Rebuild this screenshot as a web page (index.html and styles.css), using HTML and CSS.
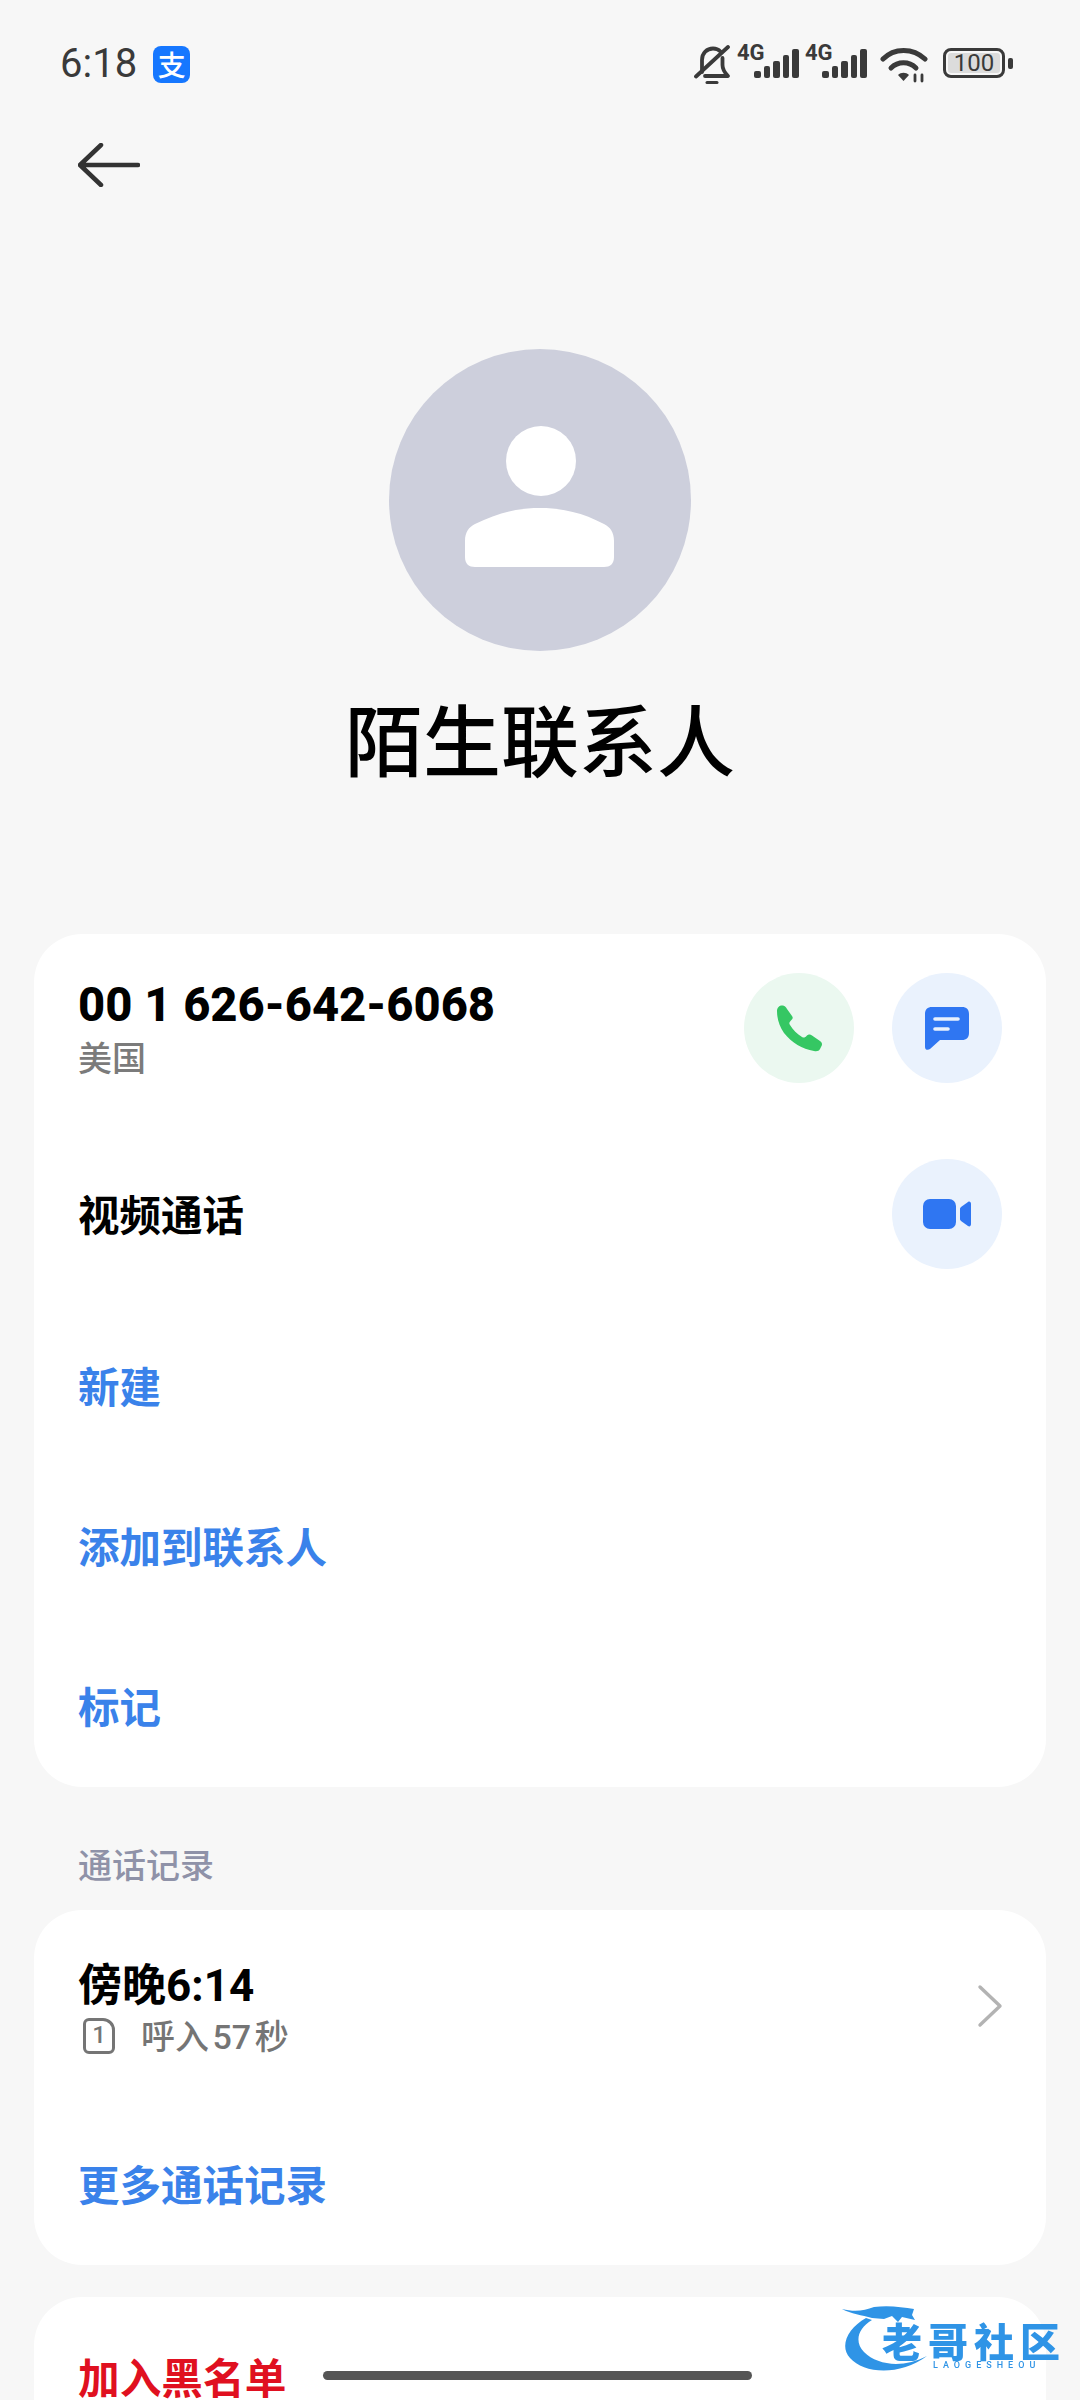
FILE: index.html
```html
<!DOCTYPE html>
<html>
<head>
  <title>陌生联系人</title>
  <link rel="stylesheet" href="styles.css">
</head>
<body>
  <div class="page">
    <div class="status-bar">
      <div class="status-left">
        <span class="clock">6:18</span>
        <span class="alipay">支</span>
      </div>
      <div class="status-right">
        <svg class="bell" width="38" height="40" viewBox="0 0 38 40" fill="none" stroke="#3a3a3a" stroke-width="3.800" stroke-linecap="round" stroke-linejoin="round">
          <path d="M9 27V15C9 8 14 3.500 20 3.500C23 3.500 25.500 4.500 27.500 6.500M29.500 13V20C29.500 24 31 27 35 31H12"/>
          <path d="M3 31.500L35 2"/>
          <path d="M14 37.500H24" stroke-width="3"/>
        </svg>
        <div class="sim">
          <span class="net">4G</span>
          <div class="bars"><i class="b1"></i><i class="b2"></i><i class="b3"></i><i class="b4"></i><i class="b5"></i></div>
        </div>
        <div class="sim">
          <span class="net">4G</span>
          <div class="bars"><i class="b1"></i><i class="b2"></i><i class="b3"></i><i class="b4"></i><i class="b5"></i></div>
        </div>
        <svg class="wifi" width="48" height="36" viewBox="0 0 48 36" fill="none" stroke="#3a3a3a" stroke-width="5" stroke-linecap="round">
          <path d="M3 12C14 0.500 33 0.500 45 12"/>
          <path d="M11 21C18 14 29 14 36 21"/>
          <path d="M18 28C21 25 26 25 29 28L23.500 34Z" fill="#3a3a3a" stroke="none"/>
          <path d="M35 28V34M42 28V34" stroke-width="2.800"/>
        </svg>
        <div class="battery">
          <div class="battery-body"><span class="battery-level">100</span></div>
          <div class="battery-tip"></div>
        </div>
      </div>
    </div>

    <div class="toolbar">
      <svg width="62" height="44" viewBox="0 0 62 44" fill="none" stroke="#333" stroke-width="4.500" stroke-linecap="round" stroke-linejoin="round">
        <path d="M2 22H60M23 2L2 22L23 42"/>
      </svg>
    </div>

    <div class="contact-head">
      <div class="avatar">
        <svg width="150" height="142" viewBox="0 0 150 142" fill="#fff">
          <circle cx="76" cy="35" r="35"/>
          <path d="M0 115C0 106 4 101 10 98C32 87 52 82 75 82C98 82 118 87 139 98C145 101 149 106 149 115V131C149 138 145 141 139 141H10C4 141 0 138 0 131Z"/>
        </svg>
      </div>
      <h1 class="contact-name">陌生联系人</h1>
    </div>

    <div class="card card-main">
      <div class="action-row">
        <div class="number-info">
          <div class="number">00 1 626-642-6068</div>
          <div class="region">美国</div>
        </div>
        <div class="round-btn green">
          <svg width="47" height="47" viewBox="0 0 47 47" fill="#35c763">
            <path d="M1 6C1 2 4 0 7 0.500C9 1 10 2 11 4L16 11C17.500 13 16.500 14 14.500 16C13 17.500 13 18.500 14 20C17 25 21 29 26 32C28 33 29 32.500 30.500 31C32 29.500 34 29 36 30.500L44 36C46 37.500 46.500 39 45.500 41L44 44C43 46 41 46.500 38 46C26 44 16 38 8 28C3 21 1 13 1 6Z"/>
          </svg>
        </div>
        <div class="round-btn blue">
          <svg width="44" height="43" viewBox="0 0 44 43" fill="#2f76f2">
            <path d="M7 0H37C41.500 0 44 2.500 44 7V26C44 30.500 41.500 33 37 33H15L5 42C3 43.500 0 43 0 40V7C0 2.500 2.500 0 7 0Z"/>
            <path d="M10 12H33M10 22H23" stroke="#e9f1fd" stroke-width="3.600" stroke-linecap="round"/>
          </svg>
        </div>
      </div>
      <div class="action-row video-row">
        <div class="row-title">视频通话</div>
        <div class="round-btn blue">
          <svg width="48" height="32" viewBox="0 0 48 32" fill="#2f76f2">
            <rect x="0" y="1" width="33" height="30" rx="7"/>
            <path d="M38 9L45 4C46.500 3 48 4 48 6V26C48 28 46.500 29 45 28L38 23C37 22 37 21.500 37 20.500V11.500C37 10.500 37 10 38 9Z"/>
          </svg>
        </div>
      </div>
      <div class="link-row">新建</div>
      <div class="link-row">添加到联系人</div>
      <div class="link-row">标记</div>
    </div>

    <div class="section-label">通话记录</div>

    <div class="card card-log">
      <div class="log-row">
        <div class="log-info">
          <div class="log-time">傍晚<span class="tight">6:14</span></div>
          <div class="log-detail">
            <span class="sim-badge">1</span>
            <span>呼入<span class="tight">57</span>秒</span>
          </div>
        </div>
        <svg class="chevron" width="26" height="44" viewBox="0 0 26 44" fill="none" stroke="#b3b3b3" stroke-width="3.400" stroke-linecap="round" stroke-linejoin="round">
          <path d="M3 3L23 22L3 41"/>
        </svg>
      </div>
      <div class="link-row more-row">更多通话记录</div>
    </div>

    <div class="card card-block">
      <div class="block-row">加入黑名单</div>
    </div>
  </div>

  <div class="home-bar"></div>

  <div class="watermark">
    <svg width="96" height="70" viewBox="0 0 96 70" fill="none">
      <path d="M24 14C6 24 -3 42 8 54C22 70 58 72 85 52C62 64 36 62 22 48C12 38 16 24 30 16Z" fill="#2f94e6"/>
      <path d="M0 5C12 8 22 7 32 3C46 1 60 3 72 5L70 11L73 16L60 13L56 18L50 12L42 15L30 14C20 11 9 10 0 5Z" fill="#2f94e6"/>
    </svg>
    <div class="wm-text">
      <div class="wm-title">老哥社区</div>
      <div class="wm-sub">LAOGESHEOU</div>
    </div>
  </div>
</body>
</html>
```

FILE: styles.css
```css
* {
  box-sizing: border-box;
}

html, body {
  margin: 0;
  height: 2400px;
  overflow: hidden;
}

body {
  position: relative;
  background-color: #f7f7f7;
  font-family: Roboto, "Noto Sans CJK SC", sans-serif;
  color: #000;
}

/* status bar */
.status-bar {
  height: 124px;
  padding: 44px 67px 0 60px;
  display: flex;
  justify-content: space-between;
  align-items: flex-start;
}

.status-left {
  display: flex;
  align-items: center;
  gap: 16px;
}

.clock {
  font-size: 40px;
  line-height: 40px;
  color: #3a3a3a;
}

.alipay {
  width: 37px;
  height: 37px;
  border-radius: 8px;
  background-color: #1677ff;
  color: #fff;
  font-size: 28px;
  line-height: 36px;
  text-align: center;
  font-family: "Noto Sans CJK SC", sans-serif;
  font-weight: 500;
}

.status-right {
  display: flex;
  align-items: flex-start;
}

.bell {
  margin-top: 1px;
  margin-right: 6px;
}

.sim {
  position: relative;
  width: 68px;
  height: 40px;
}

.net {
  position: absolute;
  left: 0;
  top: -3px;
  font-size: 22px;
  line-height: 24px;
  font-weight: 700;
  color: #3a3a3a;
}

.bars {
  position: absolute;
  left: 17px;
  bottom: 6px;
  display: flex;
  align-items: flex-end;
  gap: 3px;
}

.bars i {
  display: block;
  width: 6.500px;
  background-color: #3a3a3a;
  border-radius: 2px;
}

.bars .b1 { height: 7px; }
.bars .b2 { height: 12px; }
.bars .b3 { height: 17px; }
.bars .b4 { height: 23px; }
.bars .b5 { height: 29px; }

.wifi {
  margin: 3px 15px 0 7px;
}

.battery {
  display: flex;
  align-items: center;
  margin-top: 4px;
}

.battery-body {
  width: 62px;
  height: 30px;
  border: 3px solid #3a3a3a;
  border-radius: 8px;
  padding: 2px;
}

.battery-level {
  display: block;
  height: 20px;
  border-radius: 3px;
  background-color: #dcdcdc;
  color: #3a3a3a;
  font-size: 24px;
  line-height: 20px;
  text-align: center;
}

.battery-tip {
  width: 5px;
  height: 11px;
  margin-left: 3px;
  background-color: #3a3a3a;
  border-radius: 2px;
}

/* back arrow */
.toolbar {
  height: 225px;
  padding: 19px 0 0 78px;
}

/* avatar and name */
.contact-head {
  height: 585px;
  display: flex;
  flex-direction: column;
  align-items: center;
}

.avatar {
  width: 302px;
  height: 302px;
  border-radius: 50%;
  background-color: #cdcfdc;
  display: flex;
  align-items: center;
  justify-content: center;
  padding-bottom: 7px;
}

.contact-name {
  margin: 36px 0 0;
  font-family: "Noto Sans CJK SC", sans-serif;
  font-size: 78px;
  line-height: 100px;
  font-weight: 500;
}

/* cards */
.card {
  margin: 0 34px;
  background-color: #fff;
  border-radius: 48px;
}

.card-main {
  height: 853px;
  padding: 39px 44px 0;
}

.action-row {
  display: flex;
  align-items: center;
  gap: 38px;
  height: 110px;
}

.video-row {
  margin-top: 76px;
  margin-bottom: 36px;
}

.number-info {
  flex: 1;
  padding-bottom: 3px;
}

.number {
  font-size: 47.200px;
  line-height: 60px;
  font-weight: 800;
}

.region {
  font-family: "Noto Sans CJK SC", sans-serif;
  font-size: 34px;
  line-height: 44px;
  font-weight: 500;
  color: #7b7b7b;
}

.row-title {
  flex: 1;
  padding-bottom: 2px;
  font-family: "Noto Sans CJK SC", sans-serif;
  font-size: 41.500px;
  font-weight: 700;
}

.round-btn {
  width: 110px;
  height: 110px;
  border-radius: 50%;
  display: flex;
  align-items: center;
  justify-content: center;
}

.green {
  background-color: #ebf8f0;
}

.blue {
  background-color: #eaf2fd;
}

.link-row {
  height: 160px;
  display: flex;
  align-items: center;
  font-family: "Noto Sans CJK SC", sans-serif;
  font-size: 41.500px;
  font-weight: 700;
  color: #3a82ea;
}

.section-label {
  margin: 0 78px;
  height: 123px;
  padding-top: 53px;
  font-family: "Noto Sans CJK SC", sans-serif;
  font-size: 34px;
  line-height: 48px;
  font-weight: 500;
  color: #8f92a8;
}

/* call log */
.card-log {
  height: 355px;
  padding: 40px 44px 0;
}

.log-row {
  display: flex;
  align-items: flex-start;
  justify-content: space-between;
  height: 120px;
}

.log-info {
  padding-top: 1px;
}

.log-time {
  font-family: "Noto Sans CJK SC", sans-serif;
  font-size: 44px;
  line-height: 62px;
  font-weight: 700;
}

.log-time .tight {
  margin: 0;
}

.tight {
  font-family: Roboto, sans-serif;
  margin: 0 3.500px;
}

.log-detail {
  display: flex;
  align-items: center;
  gap: 26px;
  margin-top: -6px;
  padding-left: 5px;
  font-family: "Noto Sans CJK SC", sans-serif;
  font-size: 34px;
  line-height: 48px;
  font-weight: 500;
  color: #757575;
}

.sim-badge {
  width: 32px;
  height: 36px;
  border: 3.500px solid #757575;
  border-radius: 6px;
  border-top-right-radius: 12px;
  font-family: Roboto, sans-serif;
  font-size: 24px;
  line-height: 29px;
  font-weight: 500;
  text-align: center;
}

.chevron {
  margin: 34px -1px 0 0;
}

.more-row {
  height: 152px;
  margin-top: 37px;
}

.card-block {
  margin-top: 32px;
  height: 200px;
  padding: 56px 44px 0;
}

.block-row {
  font-family: "Noto Sans CJK SC", sans-serif;
  font-size: 41.700px;
  line-height: 46px;
  font-weight: 700;
  color: #e01020;
}

/* overlays */
.home-bar {
  position: absolute;
  left: 323px;
  top: 2371px;
  width: 429px;
  height: 9px;
  border-radius: 5px;
  background-color: #555;
}

.watermark {
  position: absolute;
  left: 842px;
  top: 2304px;
  display: flex;
  filter: blur(0.600px);
}

.wm-text {
  margin: 17px 0 0 -56px;
  white-space: nowrap;
}

.wm-title {
  font-family: "Noto Sans CJK SC", sans-serif;
  font-size: 40px;
  line-height: 38px;
  font-weight: 900;
  letter-spacing: 6px;
  color: #2f94e6;
}

.wm-sub {
  font-family: Roboto, sans-serif;
  font-size: 9px;
  line-height: 12px;
  font-weight: 500;
  letter-spacing: 5px;
  color: #2f94e6;
  padding-left: 51px;
}
```
